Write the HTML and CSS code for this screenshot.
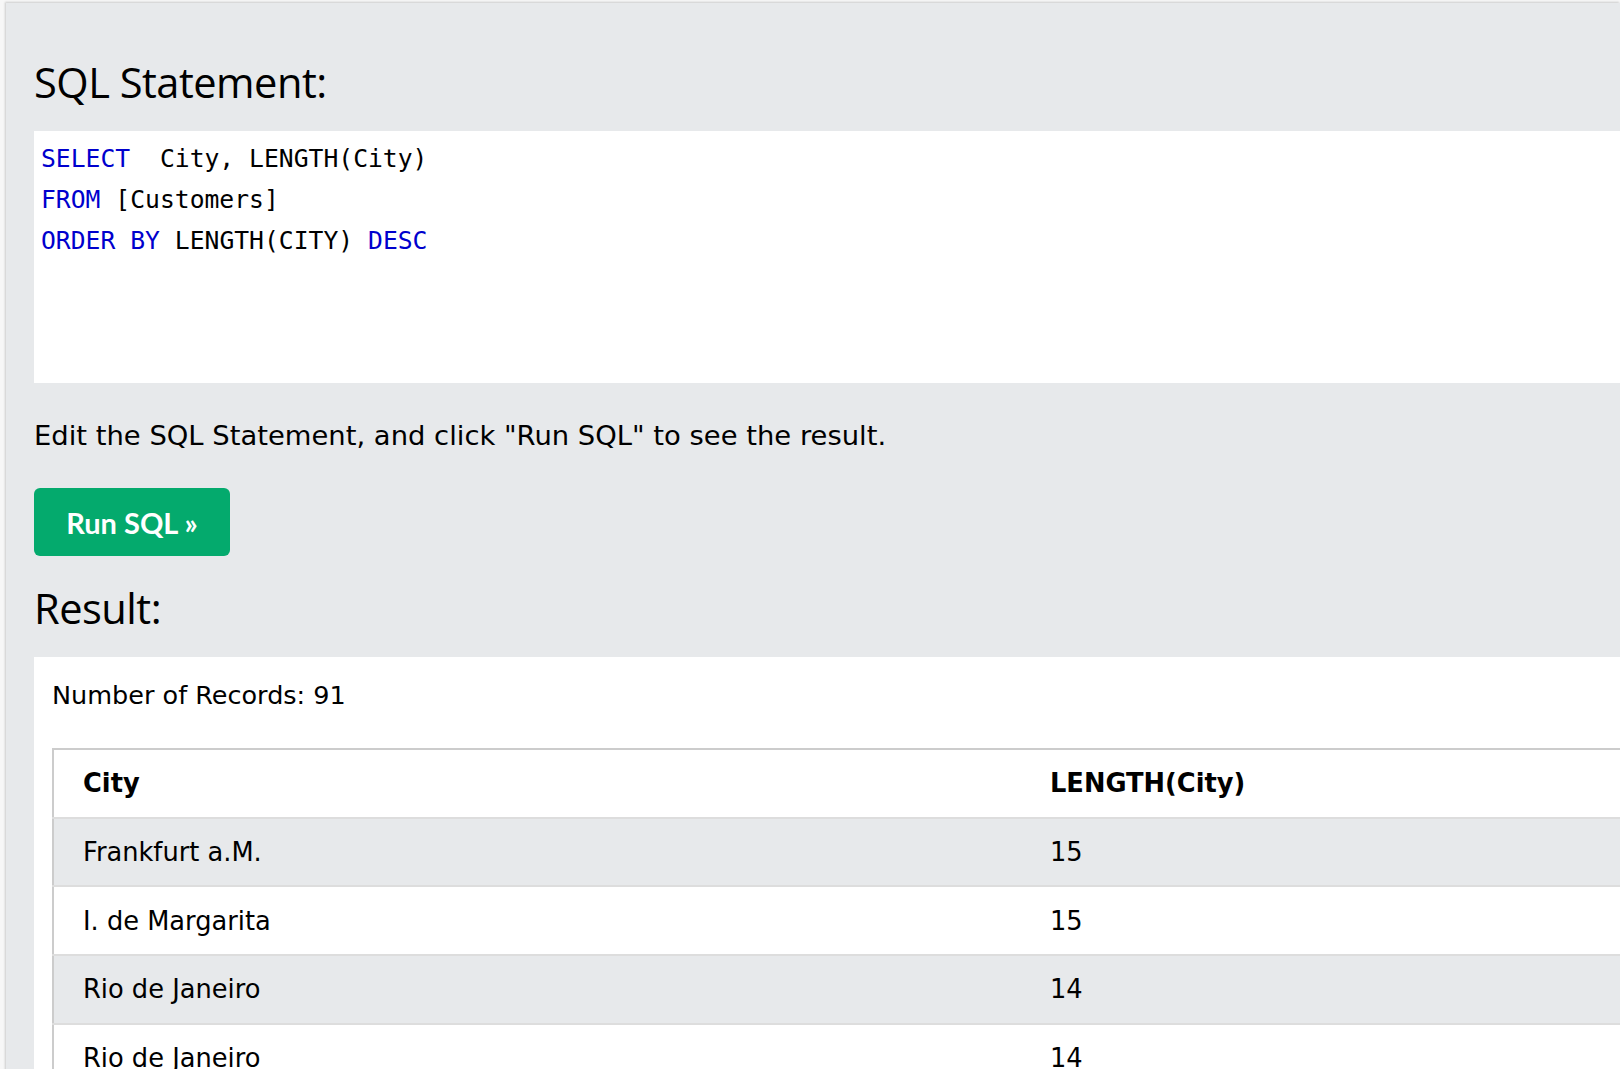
FILE: index.html
```html
<!DOCTYPE html>
<html lang="en">
<head>
<meta charset="utf-8">
<title>SQL Tryit</title>
<link rel="stylesheet" href="styles.css">
</head>
<body>
<div class="panel">
  <h2 class="heading heading-sql">SQL Statement:</h2>
  <div class="code">
    <div class="code-line"><span class="kw">SELECT</span>  City, LENGTH(City)</div>
    <div class="code-line"><span class="kw">FROM</span> [Customers]</div>
    <div class="code-line"><span class="kw">ORDER</span> <span class="kw">BY</span> LENGTH(CITY) <span class="kw">DESC</span></div>
  </div>
  <p class="hint">Edit the SQL Statement, and click "Run SQL" to see the result.</p>
  <button class="run-btn" type="button">Run SQL »</button>
  <h2 class="heading heading-result">Result:</h2>
  <div class="result">
    <div class="count">Number of Records: 91</div>
    <table class="grid">
      <thead>
        <tr><th class="col-city">City</th><th class="col-len">LENGTH(City)</th></tr>
      </thead>
      <tbody>
        <tr class="odd"><td class="col-city">Frankfurt a.M.</td><td class="col-len">15</td></tr>
        <tr><td class="col-city">I. de Margarita</td><td class="col-len">15</td></tr>
        <tr class="odd"><td class="col-city">Rio de Janeiro</td><td class="col-len">14</td></tr>
        <tr><td class="col-city">Rio de Janeiro</td><td class="col-len">14</td></tr>
      </tbody>
    </table>
  </div>
</div>
</body>
</html>
```

FILE: styles.css
```css
html, body {
  margin: 0;
  padding: 0;
  background: #f7f7f7;
  overflow: hidden;
  height: 100%;
}

.panel {
  margin: 3px 0 0 6px;
  background: #e7e9eb;
  padding: 49px 0 0 28px;
  min-height: 1200px;
  box-shadow: -1px -1px 2px rgba(0, 0, 0, 0.18);
}

.heading {
  margin: 0;
  font-family: "Open Sans", "Noto Sans", sans-serif;
  font-weight: 400;
  font-size: 41.6px;
  line-height: 60px;
  color: #000;
  letter-spacing: -0.5px;
}

.heading-sql {
  margin-bottom: 19px;
}

.code {
  background: #fff;
  height: 252px;
  box-sizing: border-box;
  padding: 8px 0 0 7px;
  font-family: "DejaVu Sans Mono", "Liberation Mono", monospace;
  font-size: 24.7px;
  line-height: 40.8px;
  color: #000;
}

.code-line {
  white-space: pre;
}

.kw {
  color: #0000cd;
}

.hint {
  margin: 33px 0 0 0;
  font-family: "DejaVu Sans", Verdana, sans-serif;
  font-size: 27.4px;
  line-height: 40px;
  color: #000;
}

.run-btn {
  display: block;
  margin-top: 32px;
  width: 196px;
  height: 68px;
  border: none;
  border-radius: 6px;
  background: #04aa6d;
  color: #fff;
  font-family: "Lato", "Open Sans", sans-serif;
  font-weight: 700;
  font-size: 29px;
  padding: 0;
}

.heading-result {
  margin-top: 22px;
  margin-bottom: 19px;
}

.result {
  background: #fff;
  padding: 20px 0 0 18px;
  font-family: "DejaVu Sans", Verdana, sans-serif;
  color: #000;
}

.count {
  font-size: 25.5px;
  line-height: 36px;
  margin-bottom: 35px;
}

.grid {
  width: 100%;
  border-collapse: collapse;
  table-layout: fixed;
  border-top: 2px solid #cccccc;
  border-left: 2px solid #cccccc;
  font-size: 25.7px;
}

.grid th,
.grid td {
  text-align: left;
  height: 66.7px;
  padding: 0;
  vertical-align: middle;
  border-bottom: 2px solid #dddddd;
}

.grid th {
  font-weight: 700;
}

.col-city {
  width: 968px;
  padding-left: 29px !important;
  box-sizing: border-box;
}

.col-len {
  padding-left: 29px !important;
}

.grid tr.odd td {
  background: #e7e9eb;
}
```
